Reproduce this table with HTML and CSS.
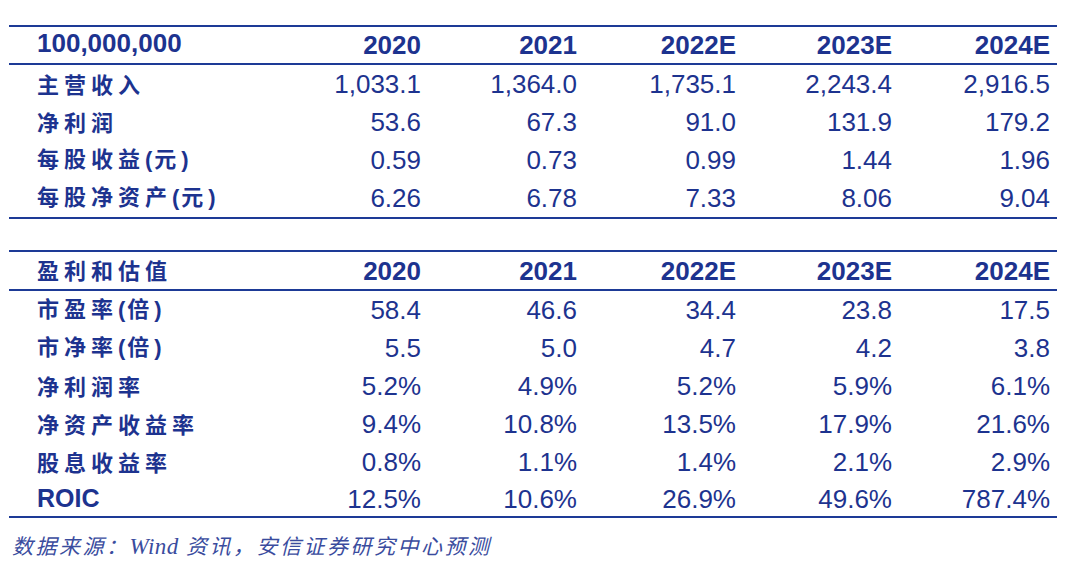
FILE: index.html
```html
<!DOCTYPE html>
<html lang="zh-CN">
<head>
<meta charset="utf-8">
<title>盈利预测</title>
<link rel="stylesheet" href="styles.css">
</head>
<body>
<div class="report">
  <section class="tbl tbl-first">
    <div class="row head">
      <div class="label num-label hl">100,000,000</div>
      <div class="cell bold">2020</div>
      <div class="cell bold">2021</div>
      <div class="cell bold">2022E</div>
      <div class="cell bold">2023E</div>
      <div class="cell bold">2024E</div>
    </div>
    <div class="row">
      <div class="label">主营收入</div>
      <div class="cell">1,033.1</div>
      <div class="cell">1,364.0</div>
      <div class="cell">1,735.1</div>
      <div class="cell">2,243.4</div>
      <div class="cell">2,916.5</div>
    </div>
    <div class="row">
      <div class="label">净利润</div>
      <div class="cell">53.6</div>
      <div class="cell">67.3</div>
      <div class="cell">91.0</div>
      <div class="cell">131.9</div>
      <div class="cell">179.2</div>
    </div>
    <div class="row">
      <div class="label">每股收益<span class="paren">(</span>元<span class="paren">)</span></div>
      <div class="cell">0.59</div>
      <div class="cell">0.73</div>
      <div class="cell">0.99</div>
      <div class="cell">1.44</div>
      <div class="cell">1.96</div>
    </div>
    <div class="row">
      <div class="label">每股净资产<span class="paren">(</span>元<span class="paren">)</span></div>
      <div class="cell">6.26</div>
      <div class="cell">6.78</div>
      <div class="cell">7.33</div>
      <div class="cell">8.06</div>
      <div class="cell">9.04</div>
    </div>
  </section>

  <section class="tbl tbl-second">
    <div class="row head">
      <div class="label">盈利和估值</div>
      <div class="cell bold">2020</div>
      <div class="cell bold">2021</div>
      <div class="cell bold">2022E</div>
      <div class="cell bold">2023E</div>
      <div class="cell bold">2024E</div>
    </div>
    <div class="row r1">
      <div class="label">市盈率<span class="paren">(</span>倍<span class="paren">)</span></div>
      <div class="cell">58.4</div>
      <div class="cell">46.6</div>
      <div class="cell">34.4</div>
      <div class="cell">23.8</div>
      <div class="cell">17.5</div>
    </div>
    <div class="row r2">
      <div class="label">市净率<span class="paren">(</span>倍<span class="paren">)</span></div>
      <div class="cell">5.5</div>
      <div class="cell">5.0</div>
      <div class="cell">4.7</div>
      <div class="cell">4.2</div>
      <div class="cell">3.8</div>
    </div>
    <div class="row r3">
      <div class="label">净利润率</div>
      <div class="cell">5.2%</div>
      <div class="cell">4.9%</div>
      <div class="cell">5.2%</div>
      <div class="cell">5.9%</div>
      <div class="cell">6.1%</div>
    </div>
    <div class="row r4">
      <div class="label">净资产收益率</div>
      <div class="cell">9.4%</div>
      <div class="cell">10.8%</div>
      <div class="cell">13.5%</div>
      <div class="cell">17.9%</div>
      <div class="cell">21.6%</div>
    </div>
    <div class="row r5">
      <div class="label">股息收益率</div>
      <div class="cell">0.8%</div>
      <div class="cell">1.1%</div>
      <div class="cell">1.4%</div>
      <div class="cell">2.1%</div>
      <div class="cell">2.9%</div>
    </div>
    <div class="row r6">
      <div class="label num-label">ROIC</div>
      <div class="cell">12.5%</div>
      <div class="cell">10.6%</div>
      <div class="cell">26.9%</div>
      <div class="cell">49.6%</div>
      <div class="cell">787.4%</div>
    </div>
  </section>

  <p class="source">数据来源：<span class="latin">Wind</span> 资讯，安信证券研究中心预测</p>
</div>
</body>
</html>
```

FILE: styles.css
```css
* {
  box-sizing: border-box;
}

html, body {
  margin: 0;
  padding: 0;
  background: #ffffff;
}

body {
  width: 1080px;
  height: 571px;
  overflow: hidden;
  color: #1d338f;
  font-family: "Liberation Sans", Arial, sans-serif;
}

.report {
  padding-top: 25px;
  padding-left: 9px;
}

.tbl {
  width: 1048px;
  border-top: 2px solid #1d3a96;
  border-bottom: 2px solid #1d3a96;
}

.tbl-second {
  margin-top: 31px;
}

.row {
  display: grid;
  grid-template-columns: 262px 157px 156px 159px 156px 158px;
  align-items: center;
  height: 38px;
}

.row.head {
  height: 38px;
  border-bottom: 2px solid #1d3a96;
}

.tbl-second .row.head {
  height: 39px;
}

.tbl-second .row.r6 {
  height: 35px;
}

.label {
  padding-left: 28px;
  padding-bottom: 3px;
  font-family: "Noto Sans CJK SC", "Noto Sans CJK TC", sans-serif;
  font-weight: 700;
  font-size: 22px;
  letter-spacing: 5px;
  line-height: 1;
  white-space: nowrap;
  color: #1d338f;
}

.paren {
  font-family: "Liberation Sans", Arial, sans-serif;
  font-weight: 700;
  letter-spacing: 0;
  margin-right: 2px;
}

.num-label {
  font-family: "Liberation Sans", Arial, sans-serif;
  font-weight: 700;
  font-size: 26px;
  letter-spacing: 0;
  padding-bottom: 0;
}

.r6 .num-label {
  font-size: 25px;
}

.hl {
  padding-bottom: 5px;
}

.cell {
  text-align: right;
  padding-right: 7px;
  font-size: 26px;
  line-height: 1;
  white-space: nowrap;
}

.cell.bold {
  font-weight: 700;
}

.source {
  margin: 14px 0 0 3px;
  font-family: "Noto Sans CJK SC", "Noto Sans CJK TC", serif;
  font-style: italic;
  font-size: 21px;
  line-height: 26px;
  letter-spacing: 2.5px;
  color: #3a4c9e;
}

.source .latin {
  font-family: "Liberation Serif", "Times New Roman", serif;
  font-size: 23px;
  letter-spacing: 0.5px;
}
```
